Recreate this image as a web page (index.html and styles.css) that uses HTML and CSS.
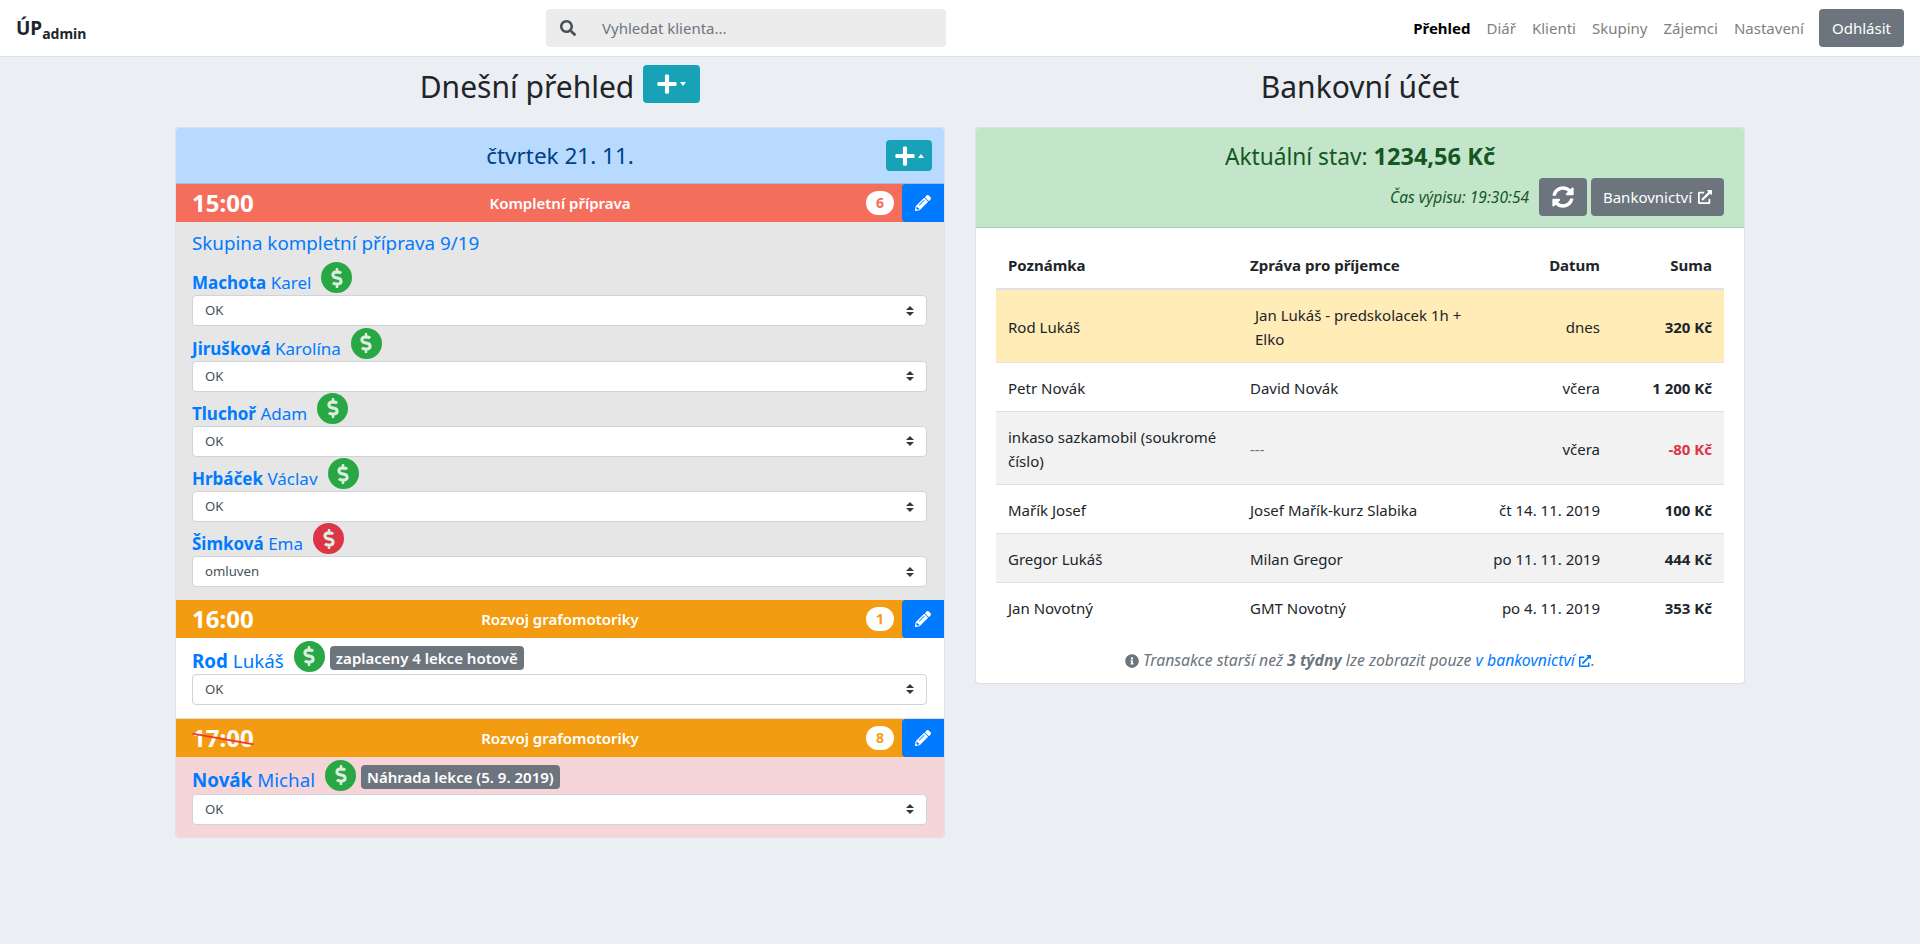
FILE: index.html
```html
<!DOCTYPE html>
<html lang="cs">
<head>
<meta charset="utf-8">
<title>ÚPadmin</title>
<link rel="stylesheet" href="styles.css">
</head>
<body>
<svg class="sprite" xmlns="http://www.w3.org/2000/svg">
<symbol id="i-search" viewBox="0 0 512 512"><path d="M505 442.7L405.3 343c-4.5-4.5-10.6-7-17-7H372c27.6-35.3 44-79.7 44-128C416 93.1 322.9 0 208 0S0 93.1 0 208s93.1 208 208 208c48.3 0 92.7-16.4 128-44v16.3c0 6.4 2.5 12.5 7 17l99.7 99.7c9.4 9.4 24.6 9.4 33.9 0l28.3-28.3c9.4-9.4 9.4-24.6.1-34zM208 336c-70.7 0-128-57.2-128-128 0-70.7 57.2-128 128-128 70.7 0 128 57.2 128 128 0 70.7-57.2 128-128 128z"/></symbol>
<symbol id="i-plus" viewBox="0 0 448 512"><path d="M416 208H272V64c0-17.67-14.33-32-32-32h-32c-17.67 0-32 14.33-32 32v144H32c-17.67 0-32 14.33-32 32v32c0 17.67 14.33 32 32 32h144v144c0 17.67 14.33 32 32 32h32c17.67 0 32-14.33 32-32V304h144c17.67 0 32-14.33 32-32v-32c0-17.67-14.33-32-32-32z"/></symbol>
<symbol id="i-pencil" viewBox="0 0 512 512"><path d="M497.9 142.1l-46.1 46.1c-4.7 4.7-12.3 4.7-17 0l-111-111c-4.7-4.7-4.7-12.3 0-17l46.1-46.1c18.7-18.7 49.1-18.7 67.9 0l60.1 60.1c18.8 18.7 18.8 49.1 0 67.9zM284.2 99.8L21.6 362.4.4 483.9c-2.9 16.4 11.4 30.6 27.8 27.8l121.5-21.3 262.6-262.6c4.7-4.7 4.7-12.3 0-17l-111-111c-4.8-4.7-12.4-4.7-17.1 0zM124.1 339.9c-5.5-5.5-5.5-14.3 0-19.8l154-154c5.5-5.5 14.3-5.5 19.8 0s5.5 14.3 0 19.8l-154 154c-5.5 5.5-14.3 5.5-19.8 0zM88 424h48v36.3l-64.5 11.3-31.1-31.1L51.7 376H88v48z"/></symbol>
<symbol id="i-sync" viewBox="0 0 512 512"><path d="M370.72 133.28C339.458 104.008 298.888 87.962 255.848 88c-77.458.068-144.328 53.178-162.791 126.85-1.344 5.363-6.122 9.15-11.651 9.15H24.103c-7.498 0-13.194-6.807-11.807-14.176C33.933 94.924 134.813 8 256 8c66.448 0 126.791 26.136 171.315 68.685L463.03 40.97C478.149 25.851 504 36.559 504 57.941V192c0 13.255-10.745 24-24 24H345.941c-21.382 0-32.09-25.851-16.971-40.971l41.75-41.749zM32 296h134.059c21.382 0 32.09 25.851 16.971 40.971l-41.75 41.75c31.262 29.273 71.835 45.319 114.876 45.28 77.418-.07 144.315-53.144 162.787-126.849 1.344-5.363 6.122-9.15 11.651-9.15h57.304c7.498 0 13.194 6.807 11.807 14.176C478.067 417.076 377.187 504 256 504c-66.448 0-126.791-26.136-171.315-68.685L48.97 471.03C33.851 486.149 8 475.441 8 454.059V320c0-13.255 10.745-24 24-24z"/></symbol>
<symbol id="i-ext" viewBox="0 0 512 512"><path d="M432 320H400a16 16 0 0 0-16 16V448H64V128H208a16 16 0 0 0 16-16V80a16 16 0 0 0-16-16H48A48 48 0 0 0 0 112V464a48 48 0 0 0 48 48H400a48 48 0 0 0 48-48V336A16 16 0 0 0 432 320ZM488 0h-128c-21.37 0-32.05 25.91-17 41l35.73 35.73L135 320.37a24 24 0 0 0 0 34L157.67 377a24 24 0 0 0 34 0L435.28 133.32 471 169c15 15 41 4.5 41-17V24A24 24 0 0 0 488 0Z"/></symbol>
<symbol id="i-info" viewBox="0 0 512 512"><path d="M256 8C119.043 8 8 119.083 8 256c0 136.997 111.043 248 248 248s248-111.003 248-248C504 119.083 392.957 8 256 8zm0 110c23.196 0 42 18.804 42 42s-18.804 42-42 42-42-18.804-42-42 18.804-42 42-42zm56 254c0 6.627-5.373 12-12 12h-88c-6.627 0-12-5.373-12-12v-24c0-6.627 5.373-12 12-12h12v-64h-12c-6.627 0-12-5.373-12-12v-24c0-6.627 5.373-12 12-12h64c6.627 0 12 5.373 12 12v100h12c6.627 0 12 5.373 12 12v24z"/></symbol>
<symbol id="i-dollar" viewBox="0 0 288 512"><path d="M209.2 233.4l-108-31.6C88.7 198.2 80 186.5 80 173.5c0-16.3 13.2-29.5 29.5-29.5h66.3c12.2 0 24.2 3.7 34.2 10.5 6.1 4.1 14.3 3.1 19.5-2l34.8-34c7.1-6.9 6.1-18.4-1.8-24.5C238 74.8 207.4 64.1 176 64V16c0-8.8-7.2-16-16-16h-32c-8.8 0-16 7.2-16 16v48h-2.5C45.8 64-5.4 118.7.5 183.6c4.2 46.1 39.4 83.6 83.8 96.6l102.5 30c12.5 3.7 21.2 15.3 21.2 28.3 0 16.3-13.2 29.5-29.5 29.5h-66.3C100 368 88 364.3 78 357.5c-6.1-4.1-14.3-3.1-19.5 2l-34.8 34c-7.1 6.9-6.1 18.4 1.8 24.5 24.5 19.2 55.1 29.9 86.5 30v48c0 8.8 7.2 16 16 16h32c8.8 0 16-7.2 16-16v-48.2c46.6-.9 90.3-28.6 105.7-72.7 21.5-61.6-14.6-124.8-72.5-141.7z"/></symbol>
</svg>

<nav class="navbar">
  <a class="brand" href="#">ÚP<sub class="brand-sub">admin</sub></a>
  <div class="search">
    <svg class="search-icon"><use href="#i-search"/></svg>
    <span class="search-text">Vyhledat klienta...</span>
  </div>
  <ul class="nav">
    <li><a class="nav-link active" href="#">Přehled</a></li>
    <li><a class="nav-link" href="#">Diář</a></li>
    <li><a class="nav-link" href="#">Klienti</a></li>
    <li><a class="nav-link" href="#">Skupiny</a></li>
    <li><a class="nav-link" href="#">Zájemci</a></li>
    <li><a class="nav-link" href="#">Nastavení</a></li>
  </ul>
  <a class="btn btn-gray logout" href="#">Odhlásit</a>
</nav>

<main class="columns">
  <section class="column">
    <div class="col-head">
      <h2 class="col-title">Dnešní přehled</h2>
      <button class="btn-add btn-add-lg"><svg class="plus-lg"><use href="#i-plus"/></svg><span class="caret caret-down"></span></button>
    </div>
    <div class="card card-day">
      <header class="day-head">
        <span class="day-title">čtvrtek 21. 11.</span>
        <button class="btn-add btn-add-sm"><svg class="plus-lg"><use href="#i-plus"/></svg><span class="caret caret-up"></span></button>
      </header>

      <div class="bar bar-red">
        <span class="time">15:00</span>
        <span class="bar-title">Kompletní příprava</span>
        <span class="count count-red">6</span>
        <a class="edit" href="#"><svg class="edit-icon"><use href="#i-pencil"/></svg></a>
      </div>
      <div class="lesson lesson-gray">
        <a class="group-link" href="#">Skupina kompletní příprava 9/19</a>
        <div class="student">
          <div class="student-line"><a class="name" href="#"><b>Machota</b> Karel</a><span class="pay pay-green"><svg class="pay-icon"><use href="#i-dollar"/></svg></span></div>
          <select class="select"><option>OK</option></select>
        </div>
        <div class="student">
          <div class="student-line"><a class="name" href="#"><b>Jirušková</b> Karolína</a><span class="pay pay-green"><svg class="pay-icon"><use href="#i-dollar"/></svg></span></div>
          <select class="select"><option>OK</option></select>
        </div>
        <div class="student">
          <div class="student-line"><a class="name" href="#"><b>Tluchoř</b> Adam</a><span class="pay pay-green"><svg class="pay-icon"><use href="#i-dollar"/></svg></span></div>
          <select class="select"><option>OK</option></select>
        </div>
        <div class="student">
          <div class="student-line"><a class="name" href="#"><b>Hrbáček</b> Václav</a><span class="pay pay-green"><svg class="pay-icon"><use href="#i-dollar"/></svg></span></div>
          <select class="select"><option>OK</option></select>
        </div>
        <div class="student">
          <div class="student-line"><a class="name" href="#"><b>Šimková</b> Ema</a><span class="pay pay-red"><svg class="pay-icon"><use href="#i-dollar"/></svg></span></div>
          <select class="select"><option>omluven</option></select>
        </div>
      </div>

      <div class="bar bar-orange">
        <span class="time">16:00</span>
        <span class="bar-title">Rozvoj grafomotoriky</span>
        <span class="count count-orange">1</span>
        <a class="edit" href="#"><svg class="edit-icon"><use href="#i-pencil"/></svg></a>
      </div>
      <div class="lesson lesson-white">
        <div class="student">
          <div class="student-line"><a class="name name-lg" href="#"><b>Rod</b> Lukáš</a><span class="pay pay-green"><svg class="pay-icon"><use href="#i-dollar"/></svg></span><span class="note">zaplaceny 4 lekce hotově</span></div>
          <select class="select"><option>OK</option></select>
        </div>
      </div>

      <div class="bar bar-orange">
        <span class="time time-cancelled">17:00</span>
        <span class="bar-title">Rozvoj grafomotoriky</span>
        <span class="count count-orange">8</span>
        <a class="edit" href="#"><svg class="edit-icon"><use href="#i-pencil"/></svg></a>
      </div>
      <div class="lesson lesson-pink">
        <div class="student">
          <div class="student-line"><a class="name name-lg" href="#"><b>Novák</b> Michal</a><span class="pay pay-green"><svg class="pay-icon"><use href="#i-dollar"/></svg></span><span class="note">Náhrada lekce (5. 9. 2019)</span></div>
          <select class="select"><option>OK</option></select>
        </div>
      </div>
    </div>
  </section>

  <section class="column">
    <div class="col-head">
      <h2 class="col-title">Bankovní účet</h2>
    </div>
    <div class="card card-bank">
      <header class="bank-head">
        <div class="balance">Aktuální stav: <b>1234,56 Kč</b></div>
        <div class="bank-tools">
          <em class="stamp">Čas výpisu: 19:30:54</em>
          <a class="btn btn-gray btn-sync" href="#"><svg class="sync-icon"><use href="#i-sync"/></svg></a>
          <a class="btn btn-gray btn-bank" href="#">Bankovnictví <svg class="ext-icon"><use href="#i-ext"/></svg></a>
        </div>
      </header>
      <div class="bank-body">
        <table class="table">
          <thead>
            <tr><th>Poznámka</th><th>Zpráva pro příjemce</th><th class="right">Datum</th><th class="right">Suma</th></tr>
          </thead>
          <tbody>
            <tr class="row-warning"><td>Rod Lukáš</td><td><span class="msg-indent">Jan Lukáš - predskolacek 1h + Elko</span></td><td class="right">dnes</td><td class="right sum">320 Kč</td></tr>
            <tr><td>Petr Novák</td><td>David Novák</td><td class="right">včera</td><td class="right sum">1 200 Kč</td></tr>
            <tr class="row-stripe"><td>inkaso sazkamobil (soukromé číslo)</td><td class="muted">---</td><td class="right">včera</td><td class="right sum negative">-80 Kč</td></tr>
            <tr><td>Mařík Josef</td><td>Josef Mařík-kurz Slabika</td><td class="right">čt 14. 11. 2019</td><td class="right sum">100 Kč</td></tr>
            <tr class="row-stripe"><td>Gregor Lukáš</td><td>Milan Gregor</td><td class="right">po 11. 11. 2019</td><td class="right sum">444 Kč</td></tr>
            <tr><td>Jan Novotný</td><td>GMT Novotný</td><td class="right">po 4. 11. 2019</td><td class="right sum">353 Kč</td></tr>
          </tbody>
        </table>
        <p class="table-note"><svg class="info-icon"><use href="#i-info"/></svg> <em>Transakce starší než <b>3 týdny</b> lze zobrazit pouze <a href="#">v bankovnictví <svg class="ext-small"><use href="#i-ext"/></svg></a>.</em></p>
      </div>
    </div>
  </section>
</main>
</body>
</html>
```

FILE: styles.css
```css
* { box-sizing: border-box; }
html, body { margin: 0; padding: 0; }
body {
  background: #ebeef3;
  color: #212529;
  font-family: "Noto Sans", "Open Sans", sans-serif;
  font-size: 15px;
  line-height: 24px;
  height: 944px;
  overflow: hidden;
}
a { color: #007bff; text-decoration: none; }
.sprite { display: none; }
svg { fill: currentColor; }

.navbar {
  display: flex;
  align-items: center;
  height: 57px;
  padding: 0 16px;
  background: #fff;
  border-bottom: 1px solid #dee2e6;
}
.brand {
  width: 530px;
  color: #212529;
  font-weight: 700;
  font-size: 19px;
  line-height: 24px;
}
.brand-sub { font-size: 14px; vertical-align: -4px; line-height: 0; }
.search {
  display: flex;
  align-items: center;
  width: 400px;
  height: 38px;
  background: #ececec;
  border-radius: 4px;
  padding-left: 14px;
}
.search-icon { width: 16px; height: 16px; color: #495057; }
.search-text { margin-left: 26px; color: #6c757d; }
.nav {
  display: flex;
  list-style: none;
  gap: 16px;
  margin: 0 15px 0 auto;
  padding: 0;
}
.nav-link { color: #7f7f7f; }
.nav-link.active { color: #000; font-weight: 700; }
.btn {
  display: inline-flex;
  align-items: center;
  justify-content: center;
  height: 38px;
  padding: 0 13px;
  border-radius: 4px;
  white-space: nowrap;
}
.btn-gray { background: #6c757d; color: #fff; }
.logout { width: 85px; }

.columns {
  display: grid;
  grid-template-columns: 770px 770px;
  gap: 30px;
  width: 1570px;
  margin: 0 auto;
}
.col-head {
  display: flex;
  justify-content: center;
  align-items: flex-start;
  gap: 9px;
  height: 70px;
  padding-top: 8px;
}
.col-title {
  margin: 3px 0 0;
  font-weight: 400;
  font-size: 30px;
  line-height: 38px;
}
.btn-add {
  display: flex;
  align-items: center;
  justify-content: center;
  gap: 3px;
  border: 0;
  padding: 0;
  border-radius: 4px;
  background: #17a2b8;
  color: #fff;
}
.btn-add-lg { width: 57px; height: 38px; }
.btn-add-sm { width: 46px; height: 31px; position: absolute; right: 12px; top: 12px; }
.plus-lg { width: 20px; height: 22px; }
.caret { width: 0; height: 0; border-left: 3.5px solid transparent; border-right: 3.5px solid transparent; }
.caret-down { border-top: 4px solid #fff; }
.caret-up { border-bottom: 4px solid #fff; }

.card {
  background: #fff;
  border: 1px solid rgba(0, 0, 0, .125);
  border-radius: 4px;
  overflow: hidden;
}
.day-head {
  position: relative;
  height: 56px;
  display: flex;
  align-items: center;
  justify-content: center;
  background: #b8daff;
  color: #004085;
  border-bottom: 1px solid rgba(0, 0, 0, .125);
}
.day-title { font-size: 22.5px; }

.bar {
  position: relative;
  display: flex;
  align-items: center;
  height: 38px;
  padding-left: 16px;
  color: #fff;
}
.bar-red { background: #f56e5c; }
.bar-orange { background: #f39c12; }
.time { font-size: 24px; font-weight: 700; line-height: 38px; width: 70px; }
.time-cancelled { position: relative; }
.time-cancelled::after {
  content: "";
  position: absolute;
  left: 0;
  top: 19px;
  width: 62px;
  height: 2px;
  background: #f3352a;
  transform: rotate(10deg);
  transform-origin: center;
}
.bar-title {
  position: absolute;
  left: 0;
  right: 0;
  text-align: center;
  font-size: 15px;
  font-weight: 600;
  pointer-events: none;
}
.count {
  margin-left: auto;
  width: 28px;
  height: 24px;
  border-radius: 12px;
  background: #fff;
  font-size: 14px;
  font-weight: 700;
  text-align: center;
  line-height: 24px;
}
.count-red { color: #f56e5c; }
.count-orange { color: #f39c12; }
.edit {
  display: flex;
  align-items: center;
  justify-content: center;
  width: 42px;
  height: 38px;
  margin-left: 8px;
  background: #007bff;
  border-radius: 4px 0 0 4px;
  color: #fff;
}
.edit-icon { width: 16px; height: 16px; }

.lesson { padding: 0 16px; }
.lesson-gray { background: #e6e6e6; padding-bottom: 13px; }
.lesson-white { background: #fff; padding-top: 1px; padding-bottom: 13px; border-bottom: 1px solid #dee2e6; }
.lesson-pink { background: #f6d5d9; padding-top: 2.75px; padding-bottom: 12px; }
.lesson-pink .student-line { padding-bottom: 3px; }
.group-link { display: block; font-size: 18.8px; line-height: 24px; padding-top: 9px; margin-bottom: 6px; }
.student-line {
  display: flex;
  align-items: flex-end;
  height: 34.25px;
  padding-bottom: 2px;
}
.name { font-size: 17px; line-height: 24px; margin-bottom: -2px; }
.name-lg { font-size: 18.8px; margin-bottom: -1px; }
.pay {
  display: inline-flex;
  align-items: center;
  justify-content: center;
  width: 31px;
  height: 31px;
  margin-left: 10px;
  border-radius: 50%;
  color: #fff;
}
.pay-green { background: #28a745; }
.pay-red { background: #dc3545; }
.pay-icon { width: 12px; height: 20px; color: #ddeee0; }
.note {
  align-self: flex-end;
  margin: 0 0 2px 5px;
  padding: 0 6px;
  height: 24px;
  line-height: 24px;
  border-radius: 4px;
  background: #6c757d;
  color: #fff;
  font-size: 15px;
  font-weight: 600;
}
.select {
  display: block;
  width: 735px;
  height: 31px;
  padding: 0 28px 0 12px;
  appearance: none;
  border: 1px solid #ced4da;
  border-radius: 4px;
  background: #fff url("data:image/svg+xml,%3csvg xmlns='http://www.w3.org/2000/svg' width='8' height='10' viewBox='0 0 4 5'%3e%3cpath fill='%23343a40' d='M2 0L0 2h4zm0 5L0 3h4z'/%3e%3c/svg%3e") no-repeat right 12px center;
  color: #495057;
  font: 13.2px/21px "Noto Sans", sans-serif;
}

.bank-head {
  height: 100px;
  padding: 10px 20px 0;
  background: #c3e6cb;
  color: #155724;
  border-bottom: 1px solid rgba(0, 0, 0, .125);
}
.balance { text-align: center; font-size: 22.7px; line-height: 36px; }
.balance b { font-size: 23.6px; }
.bank-tools {
  display: flex;
  align-items: center;
  justify-content: flex-end;
  gap: 4px;
  margin-top: 3px;
}
.stamp { margin-right: 6px; font-size: 15.5px; }
.btn-sync { width: 48px; padding: 0; }
.btn-bank { width: 133px; padding: 0; }
.sync-icon { width: 22px; height: 22px; }
.ext-icon { width: 14px; height: 14px; margin-left: 6px; }
.bank-body { padding: 0 20px; }
.table { width: 728px; table-layout: fixed; border-collapse: collapse; }
.table th, .table td {
  padding: 13px 12px 11px;
  text-align: left;
  vertical-align: middle;
  border-top: 1px solid #dee2e6;
}
.table th { border-top: 0; padding-top: 25px; padding-bottom: 11px; border-bottom: 2px solid #dee2e6; font-weight: 700; }
.table th:nth-child(1), .table td:nth-child(1) { width: 242px; }
.table th:nth-child(2), .table td:nth-child(2) { width: 242px; }
.table th:nth-child(3), .table td:nth-child(3) { width: 132px; white-space: nowrap; }
.table th:nth-child(4), .table td:nth-child(4) { width: 112px; }
.table .right { text-align: right; }
.sum { font-weight: 700; }
.negative { color: #dc3545; }
.muted { color: #6c757d; }
.row-warning td { background: #ffecb7; }
.row-stripe td { background: #f2f2f2; }
.msg-indent { display: block; padding-left: 5px; }
.table-note { margin: 17px 0 11px; text-align: center; color: #6c757d; font-size: 15.8px; }
.info-icon { width: 14px; height: 14px; vertical-align: -2px; }
.ext-small { width: 12px; height: 12px; vertical-align: -1px; }
```
